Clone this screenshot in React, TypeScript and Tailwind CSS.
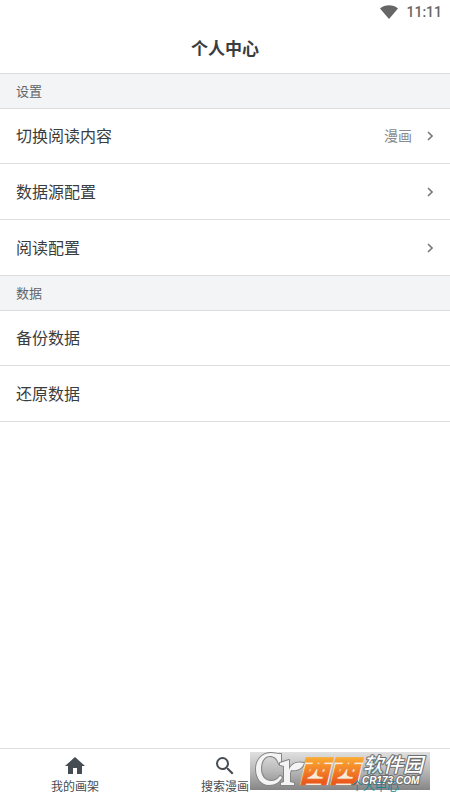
import type { ReactNode } from "react";

type Row = {
  label: string;
  value?: string;
  link?: boolean;
};

const groups: { title: string; rows: Row[] }[] = [
  {
    title: "设置",
    rows: [
      { label: "切换阅读内容", value: "漫画", link: true },
      { label: "数据源配置", link: true },
      { label: "阅读配置", link: true },
    ],
  },
  {
    title: "数据",
    rows: [{ label: "备份数据" }, { label: "还原数据" }],
  },
];

const tabs: { label: string; icon: ReactNode; active?: boolean }[] = [
  { label: "我的画架", icon: <path d="M10 20v-6h4v6h5v-8h3L12 3 2 12h3v8z" /> },
  {
    label: "搜索漫画",
    icon: (
      <path d="M15.5 14h-.79l-.28-.27A6.47 6.47 0 0 0 16 9.500 6.500 6.500 0 1 0 9.500 16c1.610 0 3.090-.590 4.230-1.570l.270.280v.790l5 4.990L20.490 19l-4.990-5zm-6 0C7.010 14 5 11.990 5 9.500S7.010 5 9.500 5 14 7.010 14 9.500 11.990 14 9.500 14z" />
    ),
  },
  {
    label: "个人中心",
    active: true,
    icon: (
      <path d="M12 12c2.210 0 4-1.790 4-4s-1.790-4-4-4-4 1.790-4 4 1.790 4 4 4zm0 2c-2.670 0-8 1.340-8 4v2h16v-2c0-2.660-5.330-4-8-4z" />
    ),
  },
];

const StatusBar = () => (
  <div className="flex h-6 items-center justify-end gap-2 px-2 text-[#666]">
    <svg viewBox="0 0 18 14" className="h-[14px] w-[18px]" fill="currentColor" aria-hidden="true">
      <path d="M0 3.500C5-.8 13-.8 18 3.500L9 14z" />
    </svg>
    <span className="font-['Roboto'] text-sm font-medium">11:11</span>
  </div>
);

const Chevron = () => (
  <svg viewBox="0 0 6 10" className="mr-[1px] h-[10px] w-[6px]" fill="none" stroke="#777b7e" strokeWidth="1.600" aria-hidden="true">
    <path d="M1 1l4 4-4 4" />
  </svg>
);

const Emblem = () => (
  <>
    <path d="M29 2l2 0v10h-2C27 6 24 4 20 4c-6 0-9 6-9 13s4 12 10 12c4 0 7-2 9-5l2 1c-2 5-7 8-13 8C11 33 6 26 6 17S12 1 21 1c4 0 6 1 8 1z" />
    <path d="M30 11l9-3v10c2-5 6-9 15-7-2 6-7 8-13 7l-1 3v9l4 1v2H31v-2l3-1V14l-4-1z" />
  </>
);

const Watermark = () => (
  <svg
    viewBox="0 0 180 38"
    className="pointer-events-none absolute right-5 bottom-[10px] h-[38px] w-[180px] overflow-visible"
    role="img"
    aria-label="西西软件园"
  >
    <defs>
      <linearGradient id="plate" x1="0" y1="0" x2="0" y2="1">
        <stop offset="0" stopColor="#e0e0e0" />
        <stop offset="0.5" stopColor="#b8b8b8" />
        <stop offset="1" stopColor="#858585" />
      </linearGradient>
      <linearGradient id="orange" x1="0" y1="0" x2="0" y2="1">
        <stop offset="0.2" stopColor="#fbb034" />
        <stop offset="0.8" stopColor="#ea5a1c" />
      </linearGradient>
    </defs>
    <rect width="180" height="38" fill="url(#plate)" />
    <g fill="#f4f4f4" stroke="#858585" strokeWidth="2" strokeLinejoin="round" paintOrder="stroke">
      <Emblem />
    </g>
    <g fill="#f8ecd8">
      <path d="M56 6h28l-6 27H50z" />
      <path d="M86 6h28l-6 27H80z" />
    </g>
    <g className="font-['Noto_Sans_CJK_SC',sans-serif] italic" fontWeight="900" strokeLinejoin="round">
      <text x="49" y="30" fontSize="30" fill="url(#orange)" stroke="url(#orange)" strokeWidth="1">
        西西
      </text>
      <text x="113" y="20" fontSize="20" fontWeight="500" fill="#fff" stroke="#6c6c6c" strokeWidth="2" paintOrder="stroke">
        软件园
      </text>
    </g>
    <text
      x="112"
      y="32"
      className="font-['Liberation_Sans',sans-serif] italic"
      fontSize="10"
      fontWeight="700"
      fill="#fff"
      stroke="#6c6c6c"
      strokeWidth="2"
      paintOrder="stroke"
    >
      CR173.COM
    </text>
  </svg>
);

const App = () => {
  return (
    <div className="flex min-h-screen flex-col bg-white font-['Noto_Sans_CJK_SC',sans-serif] text-[#3a3d40]">
      <StatusBar />
      <header className="flex h-[50px] items-center justify-center border-b border-[#dcdfe0]">
        <h1 className="pb-0.5 text-[17px] font-bold">个人中心</h1>
      </header>

      <main className="flex-1">
        {groups.map((group) => (
          <section key={group.title}>
            <h2 className="flex h-[35px] items-center border-b border-[#dcdfe0] bg-[#f2f4f6] px-4 text-[13px] text-[#5f6469]">
              {group.title}
            </h2>
            {group.rows.map((row) => (
              <button
                key={row.label}
                type="button"
                className="flex h-14 w-full items-center border-b border-[#dcdfe0] px-4 text-left first-of-type:h-[55px]"
              >
                <span className="flex-1 pb-0.5 text-base">{row.label}</span>
                {row.value && <span className="mr-[15px] pb-0.5 text-sm text-[#888c8f]">{row.value}</span>}
                {row.link && <Chevron />}
              </button>
            ))}
          </section>
        ))}
      </main>

      <div className="relative">
        <Watermark />
        <nav className="relative flex h-[52px] border-t border-[#dcdfe0]">
          {tabs.map((tab) => (
            <a
              key={tab.label}
              href="#"
              aria-current={tab.active ? "page" : undefined}
              className={`flex flex-1 flex-col items-center pt-[5px] ${tab.active ? "text-[#1b8796]" : "text-[#454c52]"}`}
            >
              <svg
                viewBox="0 0 24 24"
                className={`size-6 ${tab.active ? "opacity-20" : ""}`}
                fill="currentColor"
                aria-hidden="true"
              >
                {tab.icon}
              </svg>
              <span className="text-xs">{tab.label}</span>
            </a>
          ))}
        </nav>
      </div>
    </div>
  );
};

export default App;
